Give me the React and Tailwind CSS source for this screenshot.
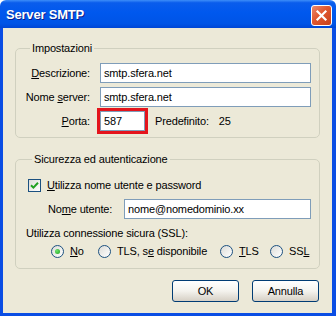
import React from 'react';

const U = ({ children }) => <span className="underline underline-offset-[1px]">{children}</span>;

const TextInput = ({ value, className = '' }) => (
  <div className={`h-[20px] bg-white border border-[#7F9DB9] pl-[3px] flex items-center leading-none whitespace-nowrap ${className}`}>
    {value}
  </div>
);

const Radio = ({ checked, children, className = '' }) => (
  <div className={`flex items-center ${className}`}>
    <span className="w-[13px] h-[13px] rounded-full border border-[#1C5180] bg-gradient-to-br from-[#DCDCD7] to-white flex items-center justify-center shrink-0">
      {checked && <span className="w-[5px] h-[5px] rounded-full bg-[radial-gradient(circle_at_35%_35%,#6BE56B,#21A121)]" />}
    </span>
    <span className="ml-[6px] leading-[13px] whitespace-nowrap">{children}</span>
  </div>
);

const Button = ({ children }) => (
  <button className="w-[67px] h-[22px] rounded-[3px] border border-[#003C74] bg-gradient-to-b from-white via-[#F4F3EE] to-[#D6D0C5] leading-none">
    {children}
  </button>
);

export default function App() {
  return (
    <div className="w-[336px] h-[316px] flex flex-col font-['Liberation_Sans',Arial,sans-serif] text-[11px] tracking-[-0.15px] text-black">
      {/* title bar */}
      <div className="h-[28px] shrink-0 rounded-t-[6px] flex items-center justify-between pl-[6px] pr-[4px] bg-[linear-gradient(to_bottom,#3D8DF9_0%,#0A5CEC_10%,#0058EE_45%,#0054E6_85%,#0046D5_100%)]">
        <span className="text-white font-bold text-[13px] tracking-[-0.2px] [text-shadow:1px_1px_0_#0A1E8C] mt-[1px]">Server SMTP</span>
        <button className="w-[21px] h-[21px] mt-[2px] rounded-[3px] border border-white bg-[linear-gradient(135deg,#EB8A6E_0%,#E0572F_45%,#C8411B_100%)] flex items-center justify-center">
          <svg width="13" height="13" viewBox="0 0 13 13">
            <path d="M2.5 2.5 L10.5 10.5 M10.5 2.5 L2.5 10.5" stroke="white" strokeWidth="2.2" strokeLinecap="square" />
          </svg>
        </button>
      </div>

      {/* body */}
      <div className="flex-1 flex flex-col bg-[#ECE9D8] border-l-[3px] border-r-[4px] border-b-[3px] border-[#0A4DE4]">
        <fieldset className="mt-[14px] mx-[12px] border border-[#D0D0BF] rounded-[5px] pt-[8px] pb-[6px] pl-[8px] pr-[8px]">
          <legend className="ml-[6px] px-[2px] leading-[13px]">Impostazioni</legend>
          <div className="grid grid-cols-[66px_1fr] gap-x-[10px] gap-y-[4px] items-center">
            <span className="text-right whitespace-nowrap"><U>D</U>escrizione:</span>
            <TextInput value="smtp.sfera.net" />
            <span className="text-right whitespace-nowrap">Nome <U>s</U>erver:</span>
            <TextInput value="smtp.sfera.net" />
            <span className="text-right whitespace-nowrap"><U>P</U>orta:</span>
            <div className="flex items-center">
              <TextInput value="587" className="w-[45px] outline-3 outline-[#E4141C]" />
              <span className="ml-[10px]">Predefinito:</span>
              <span className="ml-[10px]">25</span>
            </div>
          </div>
        </fieldset>

        <fieldset className="mt-[15px] mx-[12px] border border-[#D0D0BF] rounded-[5px] pt-[13px] pb-[10px] pl-[10px] pr-[8px]">
          <legend className="ml-[6px] px-[2px] leading-[13px]">Sicurezza ed autenticazione</legend>
          <div className="flex items-center ml-[2px]">
            <span className="w-[13px] h-[13px] border border-[#1C5180] bg-gradient-to-br from-[#DCDCD7] to-white flex items-center justify-center">
              <svg width="9" height="9" viewBox="0 0 9 9">
                <path d="M1 4.2 L3.4 6.6 L8 1.8" stroke="#21A121" strokeWidth="2" fill="none" />
              </svg>
            </span>
            <span className="ml-[6px] leading-[13px]"><U>U</U>tilizza nome utente e password</span>
          </div>
          <div className="flex items-center mt-[7px] ml-[22px]">
            <span className="w-[76px] whitespace-nowrap">No<U>m</U>e utente:</span>
            <TextInput value="nome@nomedominio.xx" className="flex-1" />
          </div>
          <div className="mt-[8px] leading-[13px]">Utilizza connessione sicura (SSL):</div>
          <div className="flex items-center mt-[5px] ml-[25px]">
            <Radio checked className="w-[47px]"><U>N</U>o</Radio>
            <Radio className="w-[122px]">TLS, s<U>e</U> disponibile</Radio>
            <Radio className="w-[50px]"><U>T</U>LS</Radio>
            <Radio>SS<U>L</U></Radio>
          </div>
        </fieldset>

        <div className="flex justify-end gap-[13px] mt-[11px] mr-[13px]">
          <Button>OK</Button>
          <Button>Annulla</Button>
        </div>
      </div>
    </div>
  );
}
